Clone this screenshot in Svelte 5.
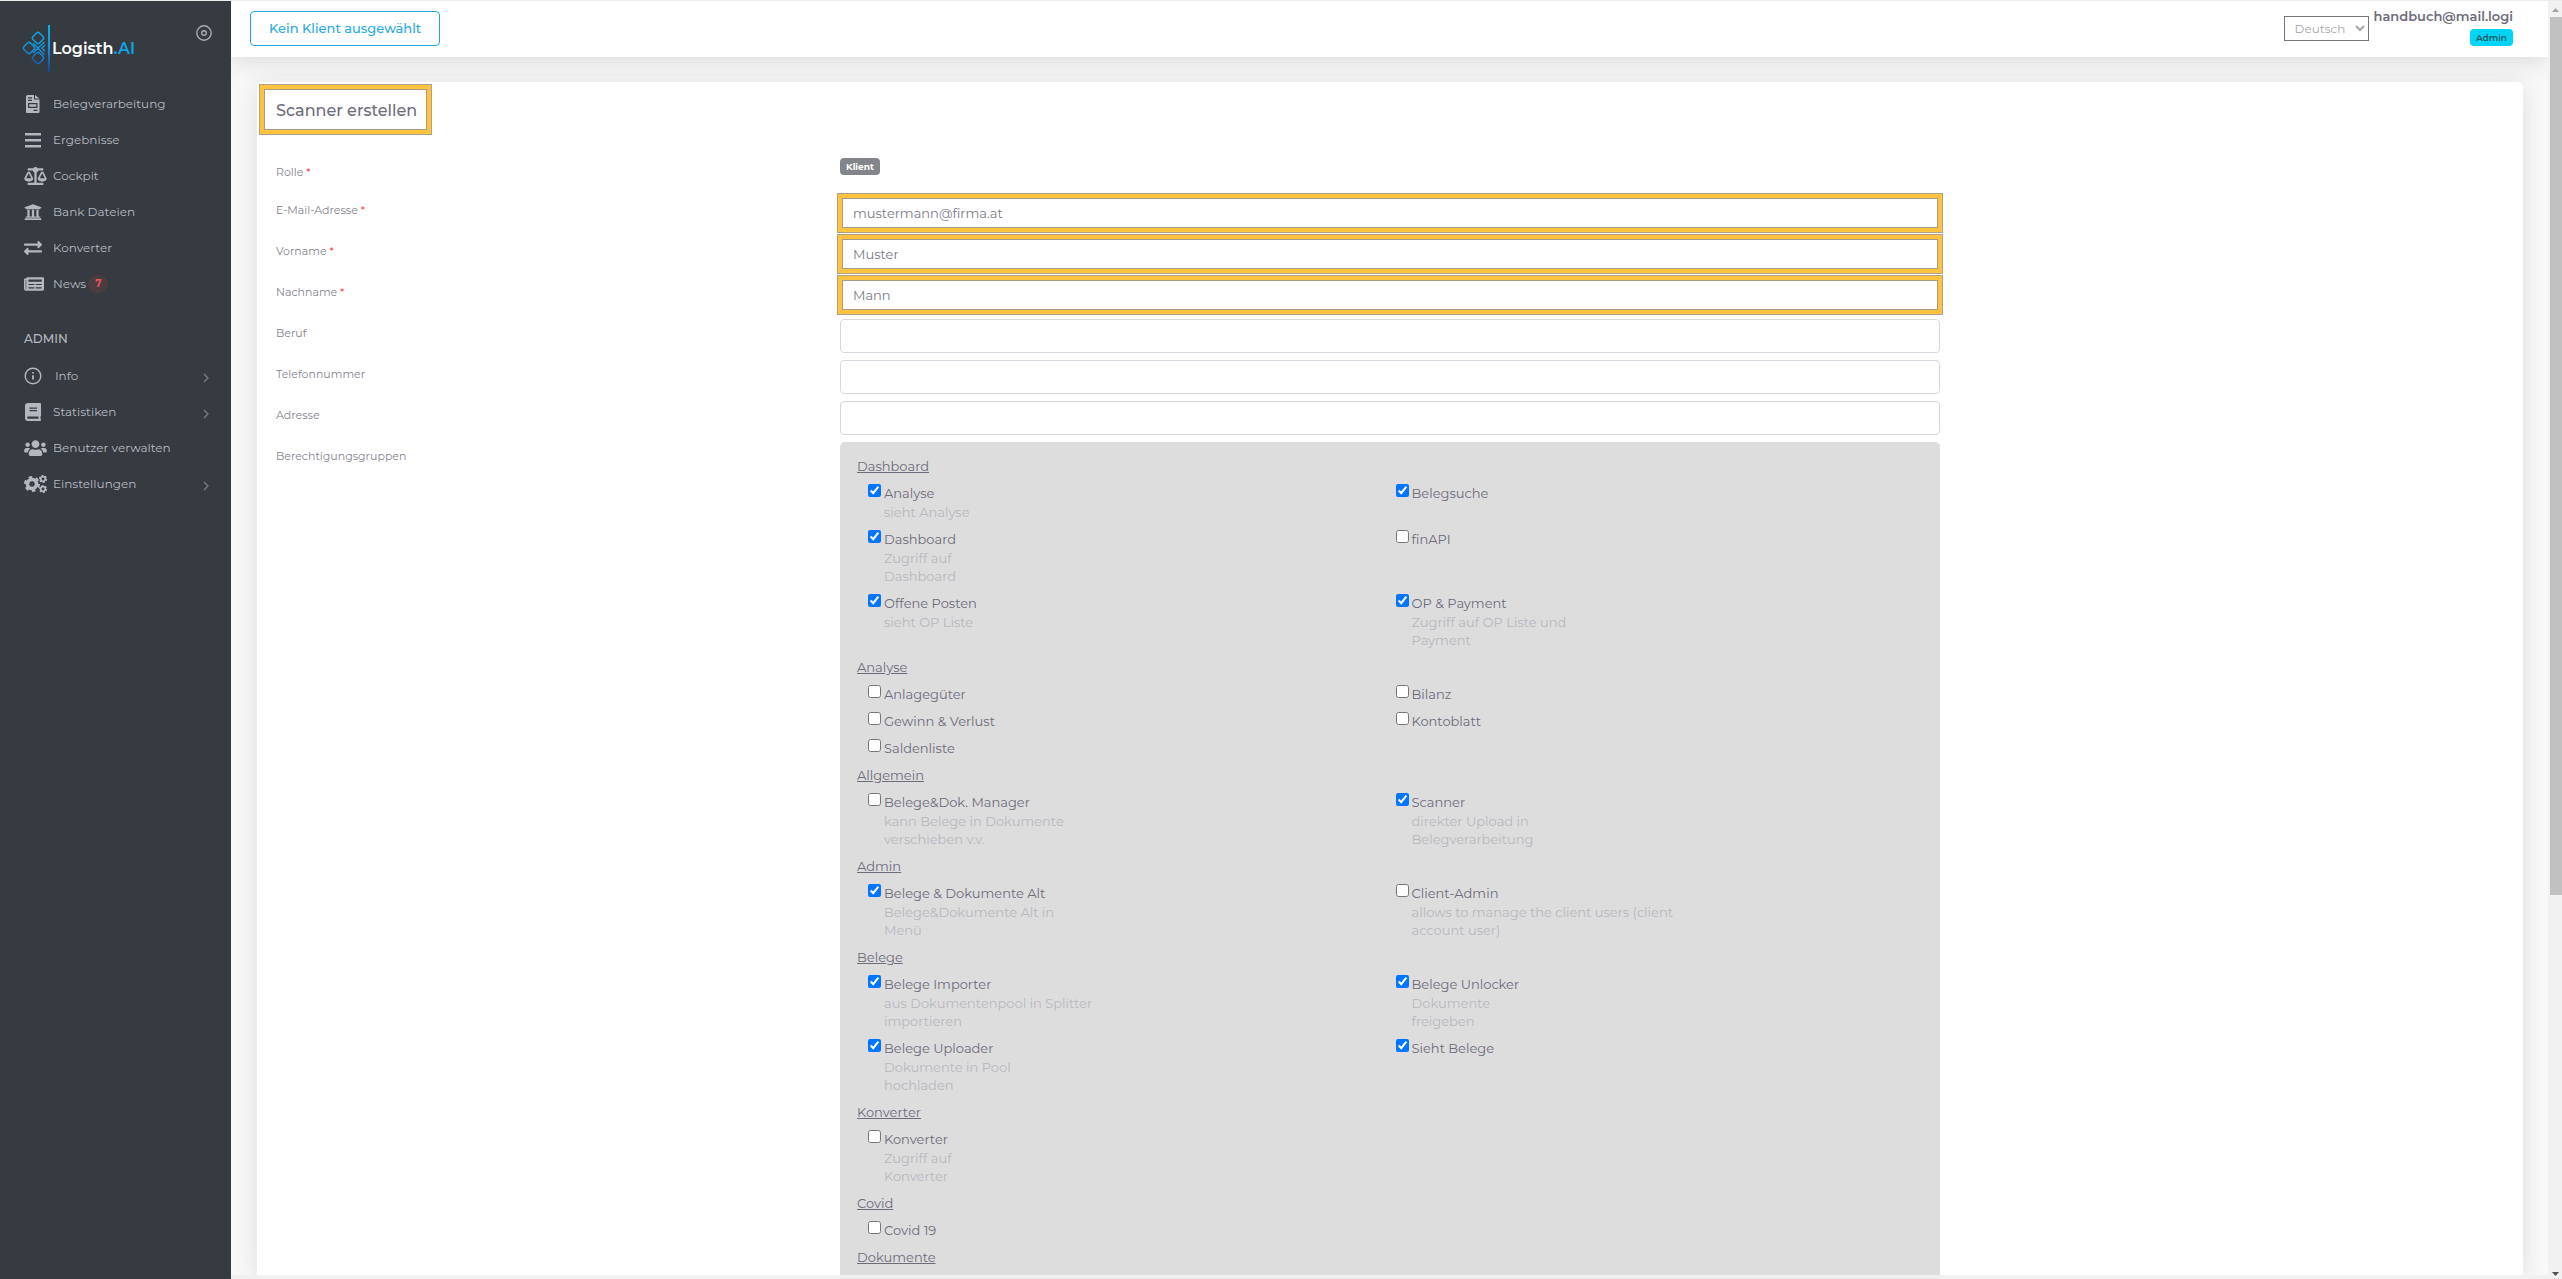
<script lang="ts">
  interface NavItem {
    label: string;
    icon: string;
    badge?: string;
    submenu?: boolean;
  }

  interface Permission {
    name: string;
    checked?: boolean;
    lines?: string[];
  }

  interface Group {
    title: string;
    items: Permission[];
  }

  const mainNav: NavItem[] = [
    { label: 'Belegverarbeitung', icon: 'invoice' },
    { label: 'Ergebnisse', icon: 'bars' },
    { label: 'Cockpit', icon: 'scale' },
    { label: 'Bank Dateien', icon: 'bank' },
    { label: 'Konverter', icon: 'exchange' },
    { label: 'News', icon: 'news', badge: '7' }
  ];

  const adminNav: NavItem[] = [
    { label: 'Info', icon: 'info', submenu: true },
    { label: 'Statistiken', icon: 'book', submenu: true },
    { label: 'Benutzer verwalten', icon: 'users' },
    { label: 'Einstellungen', icon: 'cogs', submenu: true }
  ];

  let fields = $state([
    { id: 'email', label: 'E-Mail-Adresse', value: 'mustermann@firma.at', required: true },
    { id: 'firstname', label: 'Vorname', value: 'Muster', required: true },
    { id: 'lastname', label: 'Nachname', value: 'Mann', required: true },
    { id: 'job', label: 'Beruf', value: '', required: false },
    { id: 'phone', label: 'Telefonnummer', value: '', required: false },
    { id: 'address', label: 'Adresse', value: '', required: false }
  ]);

  let groups: Group[] = $state([
    {
      title: 'Dashboard',
      items: [
        { name: 'Analyse', checked: true, lines: ['sieht Analyse'] },
        { name: 'Belegsuche', checked: true },
        { name: 'Dashboard', checked: true, lines: ['Zugriff auf', 'Dashboard'] },
        { name: 'finAPI' },
        { name: 'Offene Posten', checked: true, lines: ['sieht OP Liste'] },
        { name: 'OP & Payment', checked: true, lines: ['Zugriff auf OP Liste und', 'Payment'] }
      ]
    },
    {
      title: 'Analyse',
      items: [
        { name: 'Anlagegüter' },
        { name: 'Bilanz' },
        { name: 'Gewinn & Verlust' },
        { name: 'Kontoblatt' },
        { name: 'Saldenliste' }
      ]
    },
    {
      title: 'Allgemein',
      items: [
        { name: 'Belege&Dok. Manager', lines: ['kann Belege in Dokumente', 'verschieben v.v.'] },
        { name: 'Scanner', checked: true, lines: ['direkter Upload in', 'Belegverarbeitung'] }
      ]
    },
    {
      title: 'Admin',
      items: [
        { name: 'Belege & Dokumente Alt', checked: true, lines: ['Belege&Dokumente Alt in', 'Menü'] },
        { name: 'Client-Admin', lines: ['allows to manage the client users (client', 'account user)'] }
      ]
    },
    {
      title: 'Belege',
      items: [
        { name: 'Belege Importer', checked: true, lines: ['aus Dokumentenpool in Splitter', 'importieren'] },
        { name: 'Belege Unlocker', checked: true, lines: ['Dokumente', 'freigeben'] },
        { name: 'Belege Uploader', checked: true, lines: ['Dokumente in Pool', 'hochladen'] },
        { name: 'Sieht Belege', checked: true }
      ]
    },
    {
      title: 'Konverter',
      items: [{ name: 'Konverter', lines: ['Zugriff auf', 'Konverter'] }]
    },
    {
      title: 'Covid',
      items: [{ name: 'Covid 19' }]
    },
    {
      title: 'Dokumente',
      items: []
    }
  ]);
</script>

{#snippet icon(name: string)}
  {#if name === 'invoice'}
    <svg class="icon" width="18" height="18" viewBox="0 0 18 18"><path fill-rule="evenodd" d="M3.500 0H10v4.500h5.500v12.500a1 1 0 0 1-1 1H3a1 1 0 0 1-1-1V1.500A1.500 1.500 0 0 1 3.500 0zM4 2.200v1.200h4V2.200zM4 4.700v1.200h4V4.700zM4 8v5h9.500V8zm1.200 1.200h7.100v2.600H5.200zM9.500 14.700v1.200h4v-1.200z"/><path d="M11 0l4.500 3.600H11z"/></svg>
  {:else if name === 'bars'}
    <svg class="icon" width="18" height="18" viewBox="0 0 18 18"><path d="M1 2h16v2.600H1zM1 8h16v2.600H1zM1 14h16v2.600H1z"/></svg>
  {:else if name === 'scale'}
    <svg class="icon" width="23" height="18" viewBox="0 0 640 512"><path d="M256 336h-.02c0-16.180 1.340-8.730-85.050-181.510-17.650-35.290-68.190-35.360-85.870 0C-2.060 328.750.02 320.330.02 336H0c0 44.180 57.310 80 128 80s128-35.820 128-80zM128 176l72 144H56l72-144zm511.980 160c0-16.180 1.340-8.730-85.050-181.510-17.650-35.290-68.190-35.360-85.870 0-87.120 174.260-85.040 165.840-85.040 181.510H384c0 44.180 57.310 80 128 80s128-35.820 128-80h-.02zM440 320l72-144 72 144H440zm88 128H352V153.250c23.510-10.290 41.160-31.480 46.390-57.250H528c8.840 0 16-7.160 16-16V48c0-8.840-7.160-16-16-16H383.640C369.040 12.680 346.090 0 320 0s-49.040 12.680-63.640 32H112c-8.840 0-16 7.160-16 16v32c0 8.840 7.160 16 16 16h129.610c5.230 25.760 22.870 46.960 46.390 57.250V448H112c-8.840 0-16 7.160-16 16v32c0 8.840 7.160 16 16 16h416c8.840 0 16-7.160 16-16v-32c0-8.840-7.160-16-16-16z"/></svg>
  {:else if name === 'bank'}
    <svg class="icon" width="18" height="18" viewBox="0 0 512 512"><path d="M496 128v16a8 8 0 0 1-8 8h-24v12c0 6.627-5.373 12-12 12H60c-6.627 0-12-5.373-12-12v-12H24a8 8 0 0 1-8-8v-16a8 8 0 0 1 4.941-7.392l232-88a7.996 7.996 0 0 1 6.118 0l232 88A8 8 0 0 1 496 128zm-24 304H40c-13.255 0-24 10.745-24 24v16a8 8 0 0 0 8 8h464a8 8 0 0 0 8-8v-16c0-13.255-10.745-24-24-24zM96 192v192H60c-6.627 0-12 5.373-12 12v20h416v-20c0-6.627-5.373-12-12-12h-36V192h-64v192h-64V192h-64v192h-64V192H96z"/></svg>
  {:else if name === 'exchange'}
    <svg class="icon" width="18" height="18" viewBox="0 0 512 512"><path d="M0 168v-16c0-13.255 10.745-24 24-24h360V80c0-21.367 25.899-32.042 40.971-16.971l80 80c9.372 9.373 9.372 24.569 0 33.941l-80 80C409.956 271.982 384 261.456 384 240v-48H24c-13.255 0-24-10.745-24-24zm488 152H128v-48c0-21.314-25.862-32.080-40.971-16.971l-80 80c-9.372 9.373-9.372 24.569 0 33.941l80 80C102.057 463.997 128 453.437 128 432v-48h360c13.255 0 24-10.745 24-24v-16c0-13.255-10.745-24-24-24z"/></svg>
  {:else if name === 'news'}
    <svg class="icon" width="20" height="18" viewBox="0 0 576 512"><path d="M552 64H88c-13.255 0-24 10.745-24 24v8H24c-13.255 0-24 10.745-24 24v272c0 30.928 25.072 56 56 56h472c26.510 0 48-21.490 48-48V88c0-13.255-10.745-24-24-24zM56 400a8 8 0 0 1-8-8V144h16v248a8 8 0 0 1-8 8zm236-16H140c-6.627 0-12-5.373-12-12v-8c0-6.627 5.373-12 12-12h152c6.627 0 12 5.373 12 12v8c0 6.627-5.373 12-12 12zm208 0H348c-6.627 0-12-5.373-12-12v-8c0-6.627 5.373-12 12-12h152c6.627 0 12 5.373 12 12v8c0 6.627-5.373 12-12 12zm-208-96H140c-6.627 0-12-5.373-12-12v-8c0-6.627 5.373-12 12-12h152c6.627 0 12 5.373 12 12v8c0 6.627-5.373 12-12 12zm208 0H348c-6.627 0-12-5.373-12-12v-8c0-6.627 5.373-12 12-12h152c6.627 0 12 5.373 12 12v8c0 6.627-5.373 12-12 12zm0-96H140c-6.627 0-12-5.373-12-12v-40c0-6.627 5.373-12 12-12h360c6.627 0 12 5.373 12 12v40c0 6.627-5.373 12-12 12z"/></svg>
  {:else if name === 'info'}
    <svg class="icon line" width="18" height="18" viewBox="0 0 18 18"><circle cx="9" cy="9" r="7.800"/><path d="M9 8.200v4.300M9 5v1.500" stroke-width="1.800"/></svg>
  {:else if name === 'book'}
    <svg class="icon" width="18" height="18" viewBox="0 0 18 18"><path fill-rule="evenodd" d="M4 0h12a1 1 0 0 1 1 1v11.500a1 1 0 0 1-.5.900v2.700a.9.900 0 0 1 .5.900V17a1 1 0 0 1-1 1H4a3 3 0 0 1-3-3V3a3 3 0 0 1 3-3zM5.500 4.500v1.200H13V4.500zM5.500 7v1.200H13V7zM4.200 13.600a1 1 0 0 0 0 2.100H14.500v-2.100z"/></svg>
  {:else if name === 'users'}
    <svg class="icon" width="23" height="18" viewBox="0 0 640 512"><path d="M96 224c35.300 0 64-28.700 64-64s-28.700-64-64-64-64 28.700-64 64 28.700 64 64 64zm448 0c35.300 0 64-28.700 64-64s-28.700-64-64-64-64 28.700-64 64 28.700 64 64 64zm32 32h-64c-17.600 0-33.500 7.100-45.100 18.600 40.300 22.100 68.900 62 75.100 109.400h66c17.700 0 32-14.300 32-32v-32c0-35.300-28.700-64-64-64zm-256 0c61.900 0 112-50.100 112-112S381.900 32 320 32 208 82.100 208 144s50.100 112 112 112zm76.800 32h-8.300c-20.800 10-43.900 16-68.500 16s-47.600-6-68.500-16h-8.300C179.600 288 128 339.600 128 403.200V432c0 26.500 21.500 48 48 48h288c26.500 0 48-21.500 48-48v-28.800c0-63.600-51.600-115.200-115.200-115.200zm-223.700-13.400C161.500 263.100 145.600 256 128 256H64c-35.300 0-64 28.700-64 64v32c0 17.700 14.300 32 32 32h65.900c6.300-47.400 34.900-87.300 75.200-109.400z"/></svg>
  {:else if name === 'cogs'}
    <svg class="icon cog" width="23" height="18" viewBox="0 0 23 18">
      <circle cx="8" cy="9" r="4.500" stroke-width="3.600"/>
      <circle cx="8" cy="9" r="7" stroke-width="2" stroke-dasharray="3.700 3.630"/>
      <circle cx="19" cy="4" r="2.300" stroke-width="1.700"/>
      <circle cx="19" cy="4" r="3.500" stroke-width="1.200" stroke-dasharray="1.900 1.765"/>
      <circle cx="19" cy="14" r="2.300" stroke-width="1.700"/>
      <circle cx="19" cy="14" r="3.500" stroke-width="1.200" stroke-dasharray="1.900 1.765"/>
    </svg>
  {/if}
{/snippet}

{#snippet navList(items: NavItem[])}
  <ul class="nav">
    {#each items as item}
      <li>
        <a href="#{item.icon}">
          <span class="icon-slot">{@render icon(item.icon)}</span>
          <span class="nav-label" class:indented={item.icon === 'info'}>{item.label}</span>
          {#if item.badge}
            <span class="nav-badge">{item.badge}</span>
          {/if}
          {#if item.submenu}
            <svg class="chevron" width="6" height="10" viewBox="0 0 6 10"><path d="M1 1l4 4-4 4"/></svg>
          {/if}
        </a>
      </li>
    {/each}
  </ul>
{/snippet}

<div class="window">
  <div class="page">
    <aside class="sidebar">
      <div class="brand">
        <a class="logo" href="#home" aria-label="Logisth.AI">
          <svg width="30" height="48" viewBox="0 0 30 48">
            <defs>
              <linearGradient id="brand-blue" gradientUnits="userSpaceOnUse" x1="0" y1="0" x2="0" y2="48">
                <stop offset="0" stop-color="#00b4f0"/>
                <stop offset="0.500" stop-color="#1193dc"/>
                <stop offset="1" stop-color="#17409c"/>
              </linearGradient>
            </defs>
            <g fill="none" stroke="url(#brand-blue)" stroke-width="1.500" stroke-linejoin="round" stroke-linecap="round">
              <rect x="11.500" y="8.500" width="9" height="9" rx="2" transform="rotate(45 16 13)"/>
              <rect x="11.500" y="28.500" width="9" height="9" rx="2" transform="rotate(45 16 33)"/>
              <rect x="2.500" y="18.500" width="9" height="9" rx="2" transform="rotate(45 7 23)"/>
              <path d="M11.500 18.500l4.500 4.500 6-5.500M11.500 27.500l4.500-4.500 6 6.500M22.500 20.500l-2.500 2.500 2.500 2.800"/>
            </g>
            <path d="M26 0h2v47h-2z" fill="url(#brand-blue)"/>
          </svg>
          <span class="wordmark">Logisth<span class="accent">.AI</span></span>
        </a>
        <button class="pin" type="button" aria-label="Menü fixieren">
          <svg width="16" height="16" viewBox="0 0 16 16"><circle cx="8" cy="8" r="7.200"/><circle cx="8" cy="8" r="2.300"/></svg>
        </button>
      </div>

      {@render navList(mainNav)}
      <h2 class="nav-title">ADMIN</h2>
      {@render navList(adminNav)}
    </aside>

    <div class="content">
      <header class="topbar">
        <button class="client" type="button">Kein Klient ausgewählt</button>
        <div class="account">
          <select class="language" aria-label="Sprache">
            <option>Deutsch</option>
          </select>
          <div class="user">
            <span class="user-mail">handbuch@mail.logi</span>
            <span class="user-role">Admin</span>
          </div>
        </div>
      </header>

      <main class="card">
        <h1 class="title highlight">Scanner erstellen</h1>

        <form class="form">
          <div class="row role">
            <span class="label">Rolle <em>*</em></span>
            <div class="control"><span class="role-badge">Klient</span></div>
          </div>

          {#each fields as field}
            <div class="row">
              <label class="label" for={field.id}>
                {field.label}
                {#if field.required}<em>*</em>{/if}
              </label>
              <div class="control">
                <div class="input-wrap" class:marked={field.required}>
                  <input id={field.id} type="text" bind:value={field.value} />
                </div>
              </div>
            </div>
          {/each}

          <div class="row">
            <span class="label">Berechtigungsgruppen</span>
            <div class="control">
              <div class="permissions">
                {#each groups as group}
                  <h3>{group.title}</h3>
                  <div class="group">
                    {#each group.items as item}
                      <label class="permission">
                        <input type="checkbox" bind:checked={item.checked} />
                        <span>
                          {item.name}
                          {#if item.lines}
                            <small>
                              {#each item.lines as line}
                                <span>{line}</span>
                              {/each}
                            </small>
                          {/if}
                        </span>
                      </label>
                    {/each}
                  </div>
                {/each}
              </div>
            </div>
          </div>
        </form>
      </main>
    </div>
  </div>

  <div class="scrollbar" aria-hidden="true">
    <svg width="14" height="16" viewBox="0 0 14 16"><path d="M4 11l3.500-4L11 11z" fill="#a3a3a3"/></svg>
    <div class="thumb"></div>
    <div class="track"></div>
    <svg width="14" height="16" viewBox="0 0 14 16"><path d="M4 9l3.500 4L11 9z" fill="#505050"/></svg>
  </div>
</div>

<style>
  :global(body) {
    margin: 0;
    background: #f0f0f0;
  }

  .window {
    box-sizing: border-box;
    height: 100vh;
    display: flex;
    overflow: hidden;
    border-top: 1px solid #ececec;
    background: #f8f8f8;
    color: #6e6b7b;
    font-family: Montserrat, Inter, sans-serif;
    font-size: 13px;
    line-height: 18px;
  }

  .page {
    flex: 1;
    min-width: 0;
    display: flex;
  }

  /* Sidebar */
  .sidebar {
    width: 231px;
    flex-shrink: 0;
    background: #363a41;
    color: #b8bbc1;
  }

  .brand {
    display: flex;
    justify-content: space-between;
    align-items: flex-start;
    padding: 24px 19px 13px 22px;
  }

  .logo {
    display: flex;
    align-items: center;
    text-decoration: none;
  }

  .wordmark {
    color: #fff;
    font-size: 16px;
    font-weight: 600;
  }

  .accent {
    color: #0ea5e4;
  }

  .pin {
    display: flex;
    padding: 0;
    border: 0;
    background: none;
  }

  .pin svg {
    fill: none;
    stroke: #a9acb2;
    stroke-width: 1.4;
  }

  .nav {
    margin: 0;
    padding: 0;
    list-style: none;
  }

  .nav a {
    display: flex;
    align-items: center;
    height: 36px;
    padding: 0 22px 0 24px;
    color: inherit;
    font-size: 12px;
    text-decoration: none;
  }

  .icon-slot {
    width: 29px;
    display: flex;
  }

  .icon {
    fill: #b4b7bd;
  }

  .icon.line,
  .icon.cog {
    fill: none;
    stroke: #b4b7bd;
    stroke-width: 1.4;
  }

  .indented {
    padding-left: 2px;
  }

  .nav-badge {
    margin-left: 2px;
    padding: 0 7px;
    border-radius: 9px;
    background: #4b3c42;
    color: #ea5455;
    font-size: 10px;
    font-weight: 700;
  }

  .chevron {
    margin-left: auto;
    padding-top: 3px;
    fill: none;
    stroke: #7e8187;
    stroke-width: 1.2;
  }

  .nav-title {
    margin: 28px 0 10px;
    padding-left: 24px;
    font-size: 12px;
    font-weight: 500;
  }

  /* Header */
  .content {
    flex: 1;
    min-width: 0;
    display: flex;
    flex-direction: column;
    overflow: hidden;
    border-bottom: 4px solid #f0f0f0;
  }

  .topbar {
    box-sizing: border-box;
    height: 56px;
    flex-shrink: 0;
    display: flex;
    justify-content: space-between;
    align-items: flex-start;
    padding: 10px 35px 0 19px;
    background: #fff;
    box-shadow: 0 4px 24px rgba(34, 41, 47, 0.14);
  }

  .client {
    height: 35px;
    padding: 0 18px 1px;
    border: 1px solid #22a7dd;
    border-radius: 4px;
    background: #fff;
    color: #29a9df;
    font-family: inherit;
    font-size: 13px;
    font-weight: 500;
  }

  .account {
    display: flex;
    gap: 5px;
  }

  .language {
    width: 85px;
    height: 25px;
    margin-top: 5px;
    padding: 0 4px 0 6px;
    border: 1px solid #767676;
    border-radius: 0;
    background: #fff;
    color: #a6a6ab;
    font-family: inherit;
    font-size: 12px;
  }

  .user {
    display: flex;
    flex-direction: column;
    align-items: flex-end;
    margin-top: -4px;
  }

  .user-mail {
    font-weight: 600;
  }

  .user-role {
    margin-top: 4px;
    padding: 0 6px;
    border-radius: 4px;
    background: #00d5f5;
    color: #1d5a68;
    font-size: 9px;
    font-weight: 600;
    line-height: 17px;
  }

  /* Card */
  .card {
    flex: 1;
    min-height: 0;
    margin: 25px 25px 0 26px;
    padding: 2px 5px 0 2px;
    border-radius: 5px 5px 0 0;
    background: #fff;
    box-shadow: 0 4px 24px rgba(34, 41, 47, 0.12);
  }

  .title {
    width: max-content;
    margin: 0 0 21px;
    padding: 12px 10px 9px 12px;
    font-size: 16px;
    font-weight: 500;
    line-height: 20px;
  }

  .highlight,
  .marked::after {
    border: 5px solid #ffc33f;
    outline: 1px solid #ada18a;
    outline-offset: -1px;
    box-shadow: inset 0 0 0 1px #a59b86;
  }

  .form {
    padding-left: 3px;
  }

  .row {
    display: grid;
    grid-template-columns: 25% 50%;
    margin-bottom: 7px;
  }

  .label,
  .control {
    padding: 0 14px;
  }

  .label {
    padding-top: 6px;
    color: #85828f;
    font-size: 11px;
    line-height: 16px;
  }

  .role {
    margin-bottom: 16px;
  }

  .role .label {
    padding-top: 8px;
  }

  .label em {
    color: #ff3b3b;
    font-style: normal;
  }

  .role-badge {
    display: inline-block;
    padding: 0 6px;
    border-radius: 4px;
    background: #82868b;
    color: #fff;
    font-size: 9px;
    font-weight: 700;
    line-height: 17px;
  }

  .input-wrap {
    position: relative;
  }

  .input-wrap input {
    box-sizing: border-box;
    display: block;
    width: 100%;
    height: 34px;
    padding: 0 12px;
    border: 1px solid #d8d6de;
    border-radius: 4px;
    background: #fff;
    color: #7b7887;
    font-family: inherit;
    font-size: 13px;
  }

  .marked::after {
    content: '';
    position: absolute;
    inset: -3px;
    pointer-events: none;
  }

  /* Permission groups */
  .permissions {
    padding: 15px 17px 24px;
    border-radius: 5px;
    background: #ddd;
  }

  .permissions h3 {
    margin: 0 0 9px;
    font-size: 13px;
    font-weight: 400;
    text-decoration: underline;
  }

  .group {
    display: grid;
    grid-template-columns: 1fr 1fr;
    padding-left: 11px;
  }

  .permission {
    display: flex;
    gap: 3px;
    margin-bottom: 9px;
  }

  .permission input {
    width: 13px;
    height: 13px;
    margin: 0;
    accent-color: #0075ff;
  }

  .permission small {
    display: block;
    margin-top: 1px;
    color: #b9b7bf;
    font-size: 13px;
  }

  .permission small span {
    display: block;
  }

  /* Scrollbar */
  .scrollbar {
    width: 14px;
    flex-shrink: 0;
    display: flex;
    flex-direction: column;
    background: #f1f1f1;
  }

  .thumb {
    flex: 705;
    margin-left: 2px;
    background: #c1c1c1;
  }

  .track {
    flex: 295;
  }
</style>
